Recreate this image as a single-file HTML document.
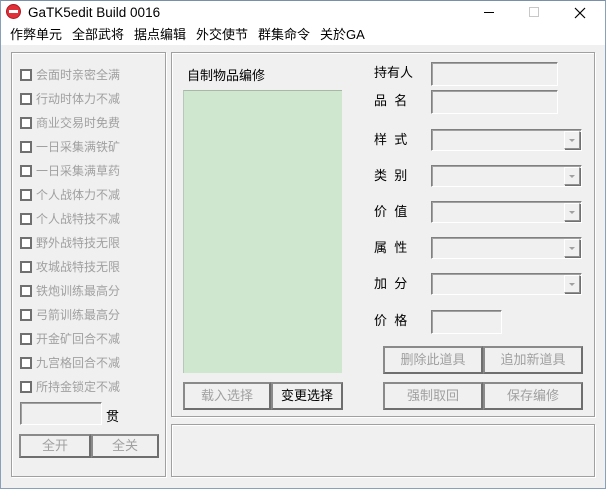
<!DOCTYPE html>
<html><head><meta charset="utf-8"><style>
*{margin:0;padding:0;box-sizing:border-box}
body{width:606px;height:489px;position:relative;overflow:hidden;background:#f0f0f0;font-family:"Liberation Sans","Noto Sans CJK SC","WenQuanYi Zen Hei",sans-serif;font-size:12px;color:#000}
.a{position:absolute}
.win{left:0;top:0;width:606px;height:489px;border:1px solid #8aa0b8;border-top:1px solid #7a8fa8}
.grp{position:absolute;border:1px solid #a0a0a0;box-shadow:inset 1px 1px 0 #fff,1px 1px 0 #fff}
.cb{position:absolute;left:20px;width:12px;height:12px;border:2px solid #707070;background:#fff}
.cl{position:absolute;left:36px;color:#a0a0a0;font-size:12px;white-space:nowrap;line-height:14px}
.tb{position:absolute;border-top:1px solid #808080;border-left:1px solid #808080;border-right:1px solid #fff;border-bottom:1px solid #fff;background:#f0f0f0;box-shadow:inset 1px 1px 0 #a0a0a0}
.btn{position:absolute;border:2px solid #6e6e6e;border-top-color:#8a8a8a;border-left-color:#8a8a8a;background:#f0f0f0;color:#a0a0a0;text-align:center;font-size:13px}
.lb{position:absolute;left:374px;font-size:13px;white-space:nowrap;line-height:15px}
.mn{position:absolute;top:27px;font-size:13px;line-height:16px;white-space:nowrap}
.cmb{position:absolute;left:431px;width:151px;height:22px;border-top:1px solid #808080;border-left:1px solid #808080;border-right:1px solid #fff;border-bottom:1px solid #fff;box-shadow:inset 1px 1px 0 #a0a0a0}
.cmb i{position:absolute;right:1px;top:1px;width:16px;height:18px;border:1px solid #909090;border-top-color:#fff;border-left-color:#fff;box-shadow:1px 1px 0 #707070}
.cmb i:after{content:"";position:absolute;left:4px;top:7px;border-left:3px solid transparent;border-right:3px solid transparent;border-top:3px solid #a0a0a0}
</style></head><body>
<div class="a" style="left:0;top:0;width:606px;height:45px;background:#fff"></div>
<div class="a" style="left:6px;top:4px;width:15px;height:15px;border-radius:50%;background:#e0303a;border:1px solid #b01820"></div>
<div class="a" style="left:9px;top:10px;width:9px;height:3px;background:#fff"></div>
<div class="a" style="left:28px;top:4px;font-size:13.5px;line-height:17px">GaTK5edit Build 0016</div>
<div class="a" style="left:484px;top:12px;width:10px;height:1px;background:#000"></div>
<div class="a" style="left:529px;top:7px;width:10px;height:10px;border:1px solid #c8c8c8"></div>
<svg class="a" style="left:574px;top:7px" width="12" height="12"><path d="M1 1L11 11M11 1L1 11" stroke="#000" stroke-width="1.2"/></svg>
<div class="mn" style="left:10px">作弊单元</div>
<div class="mn" style="left:72px">全部武将</div>
<div class="mn" style="left:134px">据点编辑</div>
<div class="mn" style="left:196px">外交使节</div>
<div class="mn" style="left:258px">群集命令</div>
<div class="mn" style="left:320px">关於GA</div>

<div class="grp" style="left:11px;top:52px;width:155px;height:425px"></div>
<div class="cb" style="top:69px"></div><div class="cl" style="top:68px">会面时亲密全满</div>
<div class="cb" style="top:93px"></div><div class="cl" style="top:92px">行动时体力不减</div>
<div class="cb" style="top:117px"></div><div class="cl" style="top:116px">商业交易时免费</div>
<div class="cb" style="top:141px"></div><div class="cl" style="top:140px">一日采集满铁矿</div>
<div class="cb" style="top:165px"></div><div class="cl" style="top:164px">一日采集满草药</div>
<div class="cb" style="top:189px"></div><div class="cl" style="top:188px">个人战体力不减</div>
<div class="cb" style="top:213px"></div><div class="cl" style="top:212px">个人战特技不减</div>
<div class="cb" style="top:237px"></div><div class="cl" style="top:236px">野外战特技无限</div>
<div class="cb" style="top:261px"></div><div class="cl" style="top:260px">攻城战特技无限</div>
<div class="cb" style="top:285px"></div><div class="cl" style="top:284px">铁炮训练最高分</div>
<div class="cb" style="top:309px"></div><div class="cl" style="top:308px">弓箭训练最高分</div>
<div class="cb" style="top:333px"></div><div class="cl" style="top:332px">开金矿回合不减</div>
<div class="cb" style="top:357px"></div><div class="cl" style="top:356px">九宫格回合不减</div>
<div class="cb" style="top:381px"></div><div class="cl" style="top:380px">所持金锁定不减</div>
<div class="tb" style="left:20px;top:402px;width:82px;height:23px"></div>
<div class="a" style="left:106px;top:406px;font-size:13px">贯</div>
<div class="btn" style="left:19px;top:434px;width:72px;height:24px;line-height:20px">全开</div>
<div class="btn" style="left:91px;top:434px;width:68px;height:24px;line-height:20px">全关</div>

<div class="grp" style="left:171px;top:52px;width:424px;height:365px"></div>
<div class="a" style="left:187px;top:65px;font-size:13px">自制物品编修</div>
<div class="a" style="left:183px;top:90px;width:159px;height:283px;background:#cfe6cf;border-top:1px solid #a8b8a8;border-left:1px solid #b8c8b8"></div>
<div class="btn" style="left:183px;top:382px;width:88px;height:28px;line-height:24px">载入选择</div>
<div class="btn" style="left:271px;top:382px;width:72px;height:28px;line-height:24px;color:#000">变更选择</div>

<div class="lb" style="top:65px">持有人</div>
<div class="lb" style="top:93px">品&nbsp;&nbsp;名</div>
<div class="lb" style="top:132px">样&nbsp;&nbsp;式</div>
<div class="lb" style="top:168px">类&nbsp;&nbsp;别</div>
<div class="lb" style="top:204px">价&nbsp;&nbsp;值</div>
<div class="lb" style="top:240px">属&nbsp;&nbsp;性</div>
<div class="lb" style="top:276px">加&nbsp;&nbsp;分</div>
<div class="lb" style="top:313px">价&nbsp;&nbsp;格</div>
<div class="tb" style="left:431px;top:62px;width:127px;height:24px"></div>
<div class="tb" style="left:431px;top:90px;width:127px;height:24px"></div>
<div class="cmb" style="top:129px"><i></i></div>
<div class="cmb" style="top:165px"><i></i></div>
<div class="cmb" style="top:201px"><i></i></div>
<div class="cmb" style="top:237px"><i></i></div>
<div class="cmb" style="top:273px"><i></i></div>
<div class="tb" style="left:431px;top:310px;width:71px;height:24px"></div>
<div class="btn" style="left:383px;top:346px;width:100px;height:28px;line-height:24px">删除此道具</div>
<div class="btn" style="left:483px;top:346px;width:100px;height:28px;line-height:24px">追加新道具</div>
<div class="btn" style="left:383px;top:382px;width:100px;height:28px;line-height:24px">强制取回</div>
<div class="btn" style="left:483px;top:382px;width:100px;height:28px;line-height:24px">保存编修</div>

<div class="grp" style="left:171px;top:424px;width:424px;height:53px"></div>
<div class="win a"></div>
</body></html>
